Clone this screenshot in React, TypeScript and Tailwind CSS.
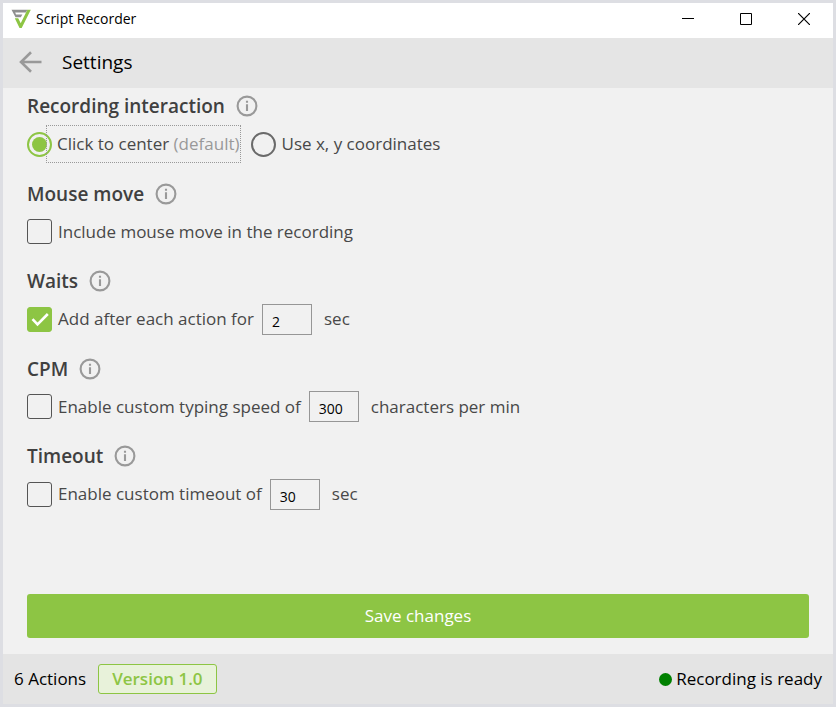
import React, { useState } from "react";

const InfoButton: React.FC<{ topic: string }> = ({ topic }) => (
  <button type="button" aria-label={`About ${topic}`} className="text-[#999999]">
    <svg width="22" height="22" viewBox="0 0 22 22" fill="none">
      <circle cx="11" cy="11" r="9.4" stroke="currentColor" strokeWidth="2.1" />
      <path d="M11 9.3v6.7M11 5.8v2" stroke="currentColor" strokeWidth="2.1" />
    </svg>
  </button>
);

interface SectionProps {
  title: string;
  children: React.ReactNode;
}

const Section: React.FC<SectionProps> = ({ title, children }) => (
  <section>
    <div className="flex items-center gap-[11px] h-9">
      <h2 className="text-[19px] leading-6 font-semibold text-[#404040]">{title}</h2>
      <InfoButton topic={title} />
    </div>
    <div className="flex items-center h-10">{children}</div>
  </section>
);

interface CheckOptionProps {
  label: string;
  checked: boolean;
  onChange: (checked: boolean) => void;
}

const CheckOption: React.FC<CheckOptionProps> = ({ label, checked, onChange }) => (
  <label className="flex items-center gap-1.5">
    <span className="grid">
      <input
        type="checkbox"
        checked={checked}
        onChange={(e) => onChange(e.target.checked)}
        className="peer col-start-1 row-start-1 appearance-none size-[25px] rounded-[3px] border border-[#555555] checked:border-[#8dc544] checked:bg-[#8dc544]"
      />
      <svg
        className="col-start-1 row-start-1 hidden peer-checked:block pointer-events-none"
        width="25"
        height="25"
        viewBox="0 0 25 25"
        fill="none"
      >
        <path d="m5.5 12.2 5 5.2L20.8 7" stroke="white" strokeWidth="2.6" />
      </svg>
    </span>
    {label}
  </label>
);

interface NumberBoxProps {
  label: string;
  value: string;
  onChange: (value: string) => void;
}

const NumberBox: React.FC<NumberBoxProps> = ({ label, value, onChange }) => (
  <input
    type="text"
    inputMode="numeric"
    aria-label={label}
    value={value}
    onChange={(e) => onChange(e.target.value)}
    className="ml-2 mr-3 w-[50px] h-[31px] border border-[#969696] px-[9px] pt-1 text-sm text-black"
  />
);

interface RadioProps {
  id: string;
  name: string;
  checked: boolean;
  onChange: () => void;
}

const Radio: React.FC<RadioProps> = ({ id, name, checked, onChange }) => (
  <span className="grid place-items-center">
    <input
      id={id}
      type="radio"
      name={name}
      checked={checked}
      onChange={onChange}
      className="peer col-start-1 row-start-1 appearance-none size-[25px] rounded-full border-2 border-[#6a6a6a] checked:border-[#8dc544]"
    />
    <span className="col-start-1 row-start-1 size-[15px] rounded-full peer-checked:bg-[#8dc544] pointer-events-none" />
  </span>
);

export default function App() {
  const [mode, setMode] = useState("center");
  const [mouseMove, setMouseMove] = useState(false);
  const [waits, setWaits] = useState(true);
  const [waitSeconds, setWaitSeconds] = useState("2");
  const [cpm, setCpm] = useState(false);
  const [cpmValue, setCpmValue] = useState("300");
  const [timeout, setTimeoutEnabled] = useState(false);
  const [timeoutSeconds, setTimeoutSeconds] = useState("30");

  return (
    <div className="min-h-screen flex flex-col border-3 border-[#dddee3] bg-[#f1f1f1] font-['Open_Sans','Noto_Sans',sans-serif]">
      <div className="flex items-center h-[35px] bg-white pl-2 pb-[3px] text-black">
        <svg width="20" height="20" viewBox="0 0 20 20">
          <path d="M.5.8h16L14.800 3.600H4.200l.8 1.800h6.400L9.800 8.200H4.500Z" fill="#8f8f8f" />
          <path d="M16.400.8h3.400L10.700 19H8.500L3.800 9.300h3.400l2.500 4.900Z" fill="#8dc544" />
        </svg>
        <span className="ml-[5px] text-sm">Script Recorder</span>
        <div className="ml-auto flex">
          <button type="button" aria-label="Minimize" className="w-[58px] grid place-items-center">
            <svg width="12" height="12" viewBox="0 0 12 12">
              <path d="M0 5.5h12" stroke="black" />
            </svg>
          </button>
          <button type="button" aria-label="Maximize" className="w-[58px] grid place-items-center">
            <svg width="12" height="12" viewBox="0 0 12 12" fill="none">
              <path d="M.5.5h11v11H.5Z" stroke="black" />
            </svg>
          </button>
          <button type="button" aria-label="Close" className="w-[58px] grid place-items-center">
            <svg width="12" height="12" viewBox="0 0 12 12">
              <path d="m0 0 12 12M12 0 0 12" stroke="black" strokeWidth="1.2" />
            </svg>
          </button>
        </div>
      </div>

      <header className="flex items-center h-[50px] gap-5 bg-[#e5e5e5] px-4 pb-[3px]">
        <button type="button" aria-label="Back" className="text-[#999999]">
          <svg width="23" height="22" viewBox="0 0 23 22" fill="none">
            <path d="M22.5 11H2M12 1.2 2 11l10 9.8" stroke="currentColor" strokeWidth="2.6" />
          </svg>
        </button>
        <h1 className="text-[19px] leading-6 text-black">Settings</h1>
      </header>

      <form
        className="flex-1 flex flex-col px-6 pb-4 text-[17px] leading-6 text-[#484848]"
        onSubmit={(e) => e.preventDefault()}
      >
        <div className="flex-1 grid auto-rows-fr mb-[68px]">
          <Section title="Recording interaction">
            <div className="flex items-center">
              <Radio id="center" name="mode" checked={mode === "center"} onChange={() => setMode("center")} />
              <label
                htmlFor="center"
                className="-ml-1.5 flex items-center h-[38px] border border-dotted border-[#999999] pl-2.5"
              >
                <span>
                  Click to center <span className="text-[#999999]">(default)</span>
                </span>
              </label>
            </div>
            <div className="ml-2.5 flex items-center gap-1.5">
              <Radio id="coords" name="mode" checked={mode === "coords"} onChange={() => setMode("coords")} />
              <label htmlFor="coords">Use x, y coordinates</label>
            </div>
          </Section>

          <Section title="Mouse move">
            <CheckOption label="Include mouse move in the recording" checked={mouseMove} onChange={setMouseMove} />
          </Section>

          <Section title="Waits">
            <CheckOption label="Add after each action for" checked={waits} onChange={setWaits} />
            <NumberBox label="Wait in seconds" value={waitSeconds} onChange={setWaitSeconds} />
            <span>sec</span>
          </Section>

          <Section title="CPM">
            <CheckOption label="Enable custom typing speed of" checked={cpm} onChange={setCpm} />
            <NumberBox label="Characters per minute" value={cpmValue} onChange={setCpmValue} />
            <span>characters per min</span>
          </Section>

          <Section title="Timeout">
            <CheckOption label="Enable custom timeout of" checked={timeout} onChange={setTimeoutEnabled} />
            <NumberBox label="Timeout in seconds" value={timeoutSeconds} onChange={setTimeoutSeconds} />
            <span>sec</span>
          </Section>
        </div>

        <button type="submit" className="h-11 rounded-[3px] bg-[#8dc544] text-white">
          Save changes
        </button>
      </form>

      <footer className="flex items-center h-[50px] gap-3 bg-[#e4e4e4] px-[11px] text-[17px] leading-6 text-black">
        <span>6 Actions</span>
        <span className="flex items-center h-[30px] rounded-[3px] border border-[#8dc544] bg-[#e8f2da] px-[13px] font-semibold text-[#8dc544]">
          Version 1.0
        </span>
        <span className="ml-auto flex items-center gap-1">
          <span className="size-[13px] rounded-full bg-[#008000]" />
          Recording is ready
        </span>
      </footer>
    </div>
  );
}
